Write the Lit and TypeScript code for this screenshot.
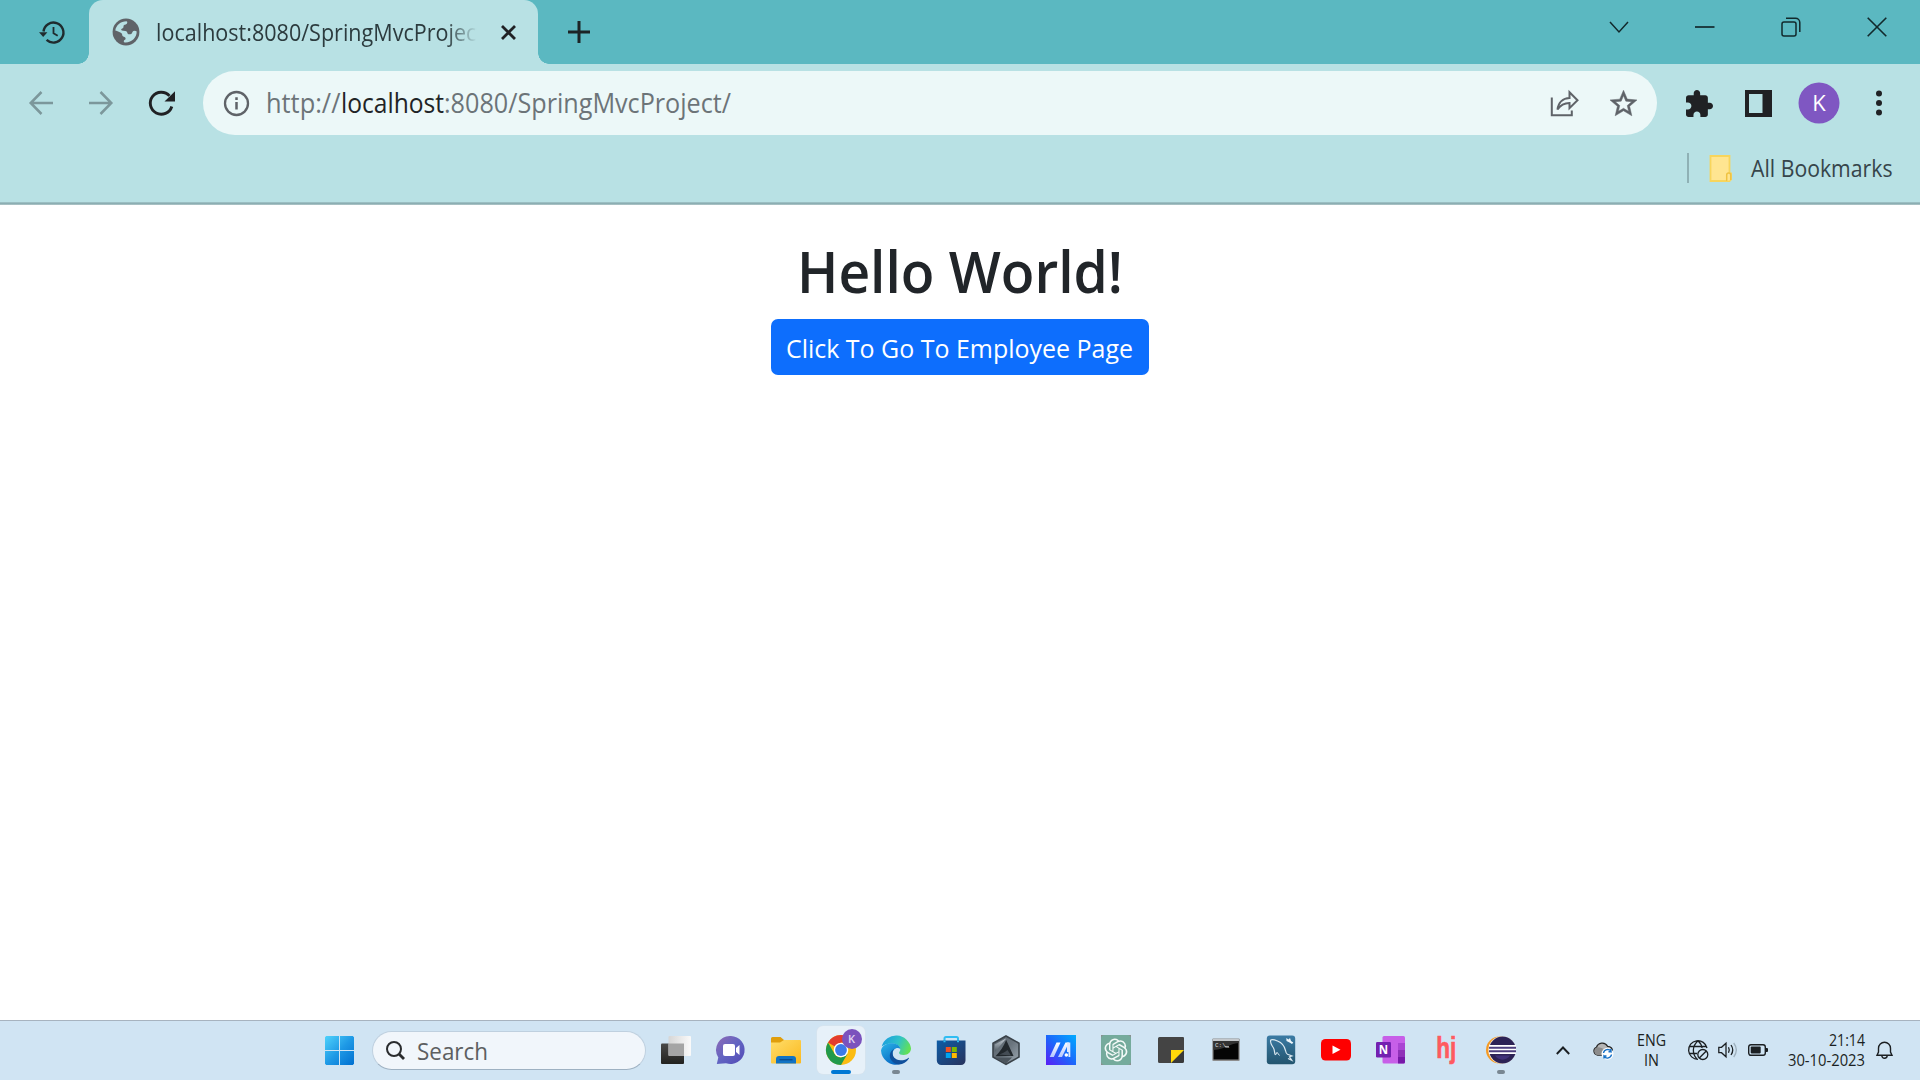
import { LitElement, html, svg, css } from "lit";
import { customElement, property } from "lit/decorators.js";

/** A line of text set to an exact measure. */
@customElement("fit-text")
class FitText extends LitElement {
  @property() text = "";
  @property({ type: Number }) w = 100;
  @property({ type: Number }) size = 16;
  @property({ type: Number }) weight = 400;
  static styles = css`
    :host { display: block; flex: none; }
    svg { display: block; overflow: visible; }
    text { font-family: "Open Sans", "Noto Sans", sans-serif; fill: currentColor; }
  `;
  render() {
    const h = Math.round(this.size * 1.2);
    return html`<svg width=${this.w} height=${h}>
      <text x="0" y=${h * 0.8} font-size=${this.size} font-weight=${this.weight}
        textLength=${this.w} lengthAdjust="spacingAndGlyphs">${this.text}</text>
    </svg>`;
  }
}

const icon = (w: number, h: number, body: unknown, vb = `0 0 ${w} ${h}`) =>
  html`<svg class="ic" width=${w} height=${h} viewBox=${vb}>${body}</svg>`;

const history = icon(26, 25, svg`
  <path d="M4.5 11.5A10 10 0 1 1 7.6 19.9" fill="none" stroke="#1f2b2e" stroke-width="2.4"/>
  <path d="M0 12.2h8.4L4.2 17z" fill="#1f2b2e"/>
  <path d="M14.5 7v6.2l4.2 2.6" fill="none" stroke="#1f2b2e" stroke-width="1.8"/>`);

const favicon = icon(28, 28, svg`
  <circle cx="14" cy="14" r="13.4" fill="#5f6368"/>
  <path d="M3.300 12.500C4 7.500 8.500 3.300 14.500 3.300C15.800 3.700 15.500 6 13.800 6.500C12 6.800 11.300 7.500 11.500 9C11.500 10.300 10 10.500 9.300 11C9 12 9.500 12.700 11 12.800C14 12.700 15.200 13.500 15.500 15.300C16 17 18 16 19.300 16C20.500 14.500 20.500 12.800 22.500 12.700C23.500 12.700 24.300 13 24.700 13.600C24.700 19.500 20 24.600 13.500 24.600C11.300 24.400 11.300 22.500 13 21.800C14 21.200 13.700 19.500 12.500 19C10.500 18.700 10.200 17.500 10 15.800C8 13.500 5.500 13.500 3.300 12.500z" fill="#b8e1e4"/>`);

const restore = icon(20, 20, svg`<g fill="none" stroke="#12292c" stroke-width="1.5">
  <rect x="1" y="5" width="14" height="14" rx="2"/><path d="M5 1.200h9.500a4.300 4.300 0 0 1 4.300 4.300V15"/></g>`);

const share = icon(29, 27, svg`<g fill="none" stroke="#5f6368" stroke-width="2">
  <path d="M1.800 7.500V25.200H21.800V20.500"/>
  <path d="M7.500 19.500C8.300 12.500 13 8.300 19.500 8V2.200L27.500 10.200L19.500 18.200V13C14.500 13 10.500 15 7.500 19.500Z"/></g>`);

const star = icon(27, 26, svg`<path fill="#5f6368" stroke="#5f6368" stroke-width=".35" d="M22 9.240l-7.190-.62L12 2 9.190 8.630 2 9.240l5.460 4.730L5.820 21 12 17.270 18.180 21l-1.630-7.030L22 9.240zM12 15.400l-3.760 2.270 1-4.280-3.320-2.880 4.380-.38L12 6.100l1.710 4.040 4.380.38-3.320 2.880 1 4.280L12 15.400z"/>`, "2 2 20 19");
const puzzle = icon(27, 27, svg`<path fill="#202124" d="M20.500 11H19V7c0-1.100-.9-2-2-2h-4V3.500C13 2.120 11.880 1 10.500 1S8 2.120 8 3.500V5H4c-1.100 0-1.990.9-1.990 2v3.800H3.500c1.490 0 2.700 1.210 2.700 2.700s-1.210 2.700-2.700 2.700H2V20c0 1.100.9 2 2 2h3.800v-1.500c0-1.490 1.210-2.700 2.700-2.700 1.490 0 2.700 1.210 2.700 2.700V22H17c1.100 0 2-.9 2-2v-4h1.500c1.380 0 2.500-1.120 2.500-2.500S21.880 11 20.500 11z"/>`, "2 1 21 21");

const winLogo = icon(29, 29, svg`
  <defs><linearGradient id="wl" gradientUnits="userSpaceOnUse" x1="0" y1="0" x2="29" y2="29"><stop offset="0" stop-color="#4fd2fb"/><stop offset=".5" stop-color="#1f9ae6"/><stop offset="1" stop-color="#006fd0"/></linearGradient></defs>
  <path fill="url(#wl)" d="M1.200 0H14V14H0V1.200zM15 0H27.800L29 1.200V14H15zM0 15H14V29H1.200L0 27.800zM15 15H29V27.800L27.800 29H15z"/>`);

/* Pinned applications, each drawn in a 30 x 30 box. */
const apps: { art: unknown; mark?: string }[] = [
  { art: svg`<defs><linearGradient id="tv" x1="0" y1="0" x2="0" y2="1"><stop offset="0" stop-color="#494949"/><stop offset="1" stop-color="#22221f"/></linearGradient>
      <linearGradient id="tw" x1="0" y1="0" x2="1" y2="0"><stop offset="0" stop-color="#d6d6d6"/><stop offset="1" stop-color="#fafafa"/></linearGradient></defs>
      <rect x="0" y="8.500" width="23" height="20.500" rx="1" fill="url(#tv)"/><rect x="7.500" y="1" width="22.500" height="20" rx="1" fill="url(#tw)"/>
      <path d="M7.500 8.500H23V21H8.500a1 1 0 0 1-1-1z" fill="#a5a5a5"/>` },
  { art: svg`<defs><linearGradient id="ch" x1="0" y1="0" x2="1" y2="1"><stop offset="0" stop-color="#8f6bb5"/><stop offset=".5" stop-color="#6264c2"/><stop offset="1" stop-color="#5148b5"/></linearGradient></defs>
      <path d="M15 1a14 14 0 1 1-5 27.200L.8 29l1.500-6.500A14 14 0 0 1 15 1z" fill="url(#ch)"/>
      <rect x="7" y="9" width="12" height="12" rx="2" fill="#fff"/><path d="M20 13l3.500-3v10L20 17z" fill="#fff"/>` },
  { art: svg`<defs><linearGradient id="fo" x1="0" y1="0" x2="1" y2="1"><stop offset="0" stop-color="#ffdd6a"/><stop offset="1" stop-color="#fbb91e"/></linearGradient></defs>
      <path d="M0 3.500A1.500 1.500 0 0 1 1.500 2H9.500L13 5V10H0z" fill="#e09e0c"/>
      <path d="M0 7.500H9L13 5H29a1 1 0 0 1 1 1V27.500a1 1 0 0 1-1 1H1a1 1 0 0 1-1-1z" fill="url(#fo)"/>
      <path d="M5 28.500V24a3 3 0 0 1 3-3H22a3 3 0 0 1 3 3V28.500z" fill="#1173c4"/><path d="M8.500 24.700H21.500" stroke="#0a4d91" stroke-width="1.400"/>` },
  { mark: "active", art: svg`
      <circle cx="15" cy="15" r="15" fill="#fbbc12"/>
      <path d="M15 15L2 7.500A15 15 0 0 1 28 7.500H15z" fill="#e33b2e"/>
      <path d="M2 7.500L8.500 18.750A7.500 7.500 0 0 0 15 22.500L21.500 18.750L15 30A15 15 0 0 1 2 7.500z" fill="#219a4b"/>
      <circle cx="15" cy="15" r="7.300" fill="#fff"/><circle cx="15" cy="15" r="5.900" fill="#3c7bea"/>
      <circle cx="26" cy="4" r="10" fill="#7b52bd"/>
      <text x="25.500" y="8" text-anchor="middle" font-family="Open Sans, sans-serif" font-size="11" font-weight="600" fill="#e0d4f2">K</text>` },
  { mark: "open", art: svg`<defs><linearGradient id="e1" x1="0" y1=".2" x2="1" y2=".5"><stop offset="0" stop-color="#1a9ce0"/><stop offset=".55" stop-color="#2fc2c9"/><stop offset="1" stop-color="#63e155"/></linearGradient>
      <linearGradient id="e2" x1="0" y1="0" x2=".6" y2="1"><stop offset="0" stop-color="#2bb5e8"/><stop offset="1" stop-color="#0869c4"/></linearGradient></defs>
      <path d="M.7 11.500A15 15 0 0 1 30 13.300c0 4-3 6.700-7.300 6.700-3 0-4.600-1-4.600-2.300 0-1 1.200-1.500 1.200-3.300 0-3.500-3.800-6-8.400-6C6 8.400 2.300 10 .7 11.500z" fill="url(#e1)"/>
      <path d="M0 15.500C1 10.500 5.500 8.300 10.500 8.300c5 0 8.700 2.400 8.800 5.700-1.500-1.400-4.500-1.300-6.300.8-3 3.600-1 11.200 5.500 14.500A15 15 0 0 1 0 15.500z" fill="url(#e2)"/>
      <path d="M11.900 15.800c-1.600 5 2.300 9.500 7.600 9.500 3.500 0 6-1 7.800-2.400.5-.3.900 0 .6.600C24 30 15.500 31.800 10.500 25.500 7.600 21.500 8.500 17 13 13.800z" fill="#10509c"/>` },
  { art: svg`<defs><linearGradient id="st" x1="0" y1="0" x2="1" y2="1"><stop offset="0" stop-color="#0e5da7"/><stop offset="1" stop-color="#28325c"/></linearGradient></defs>
      <path d="M8.500 7V3.500a1.500 1.500 0 0 1 1.500-1.500H20.500a1.500 1.500 0 0 1 1.500 1.500V7" fill="none" stroke="#30bdf2" stroke-width="2"/>
      <path d="M.8 5.500H29.500V25.500a4.500 4.500 0 0 1-4.500 4.500H5.300A4.500 4.500 0 0 1 .8 25.500z" fill="url(#st)"/><path d="M8.500 7.200V5.500M22 7.200V5.500" stroke="#30bdf2" stroke-width="2"/>
      <path d="M9.800 12h5v5h-5z" fill="#f25022"/><path d="M15.800 12h5v5h-5z" fill="#7fba00"/><path d="M9.800 18h5v5h-5z" fill="#00a4ef"/><path d="M15.800 18h5v5h-5z" fill="#ffb900"/>` },
  { art: svg`<defs><linearGradient id="ar" x1="0" y1="0" x2="1" y2="1"><stop offset="0" stop-color="#59636c"/><stop offset=".5" stop-color="#6a747d"/><stop offset="1" stop-color="#9fabb5"/></linearGradient>
      <linearGradient id="as" x1="0" y1="0" x2="0" y2="1"><stop offset="0" stop-color="#c3ccd4"/><stop offset="1" stop-color="#4e5860"/></linearGradient></defs>
      <path d="M15 1L28 8.200V22L15 29.300L2 22V8.200z" fill="url(#ar)" stroke="#3a4249" stroke-width="1.600"/>
      <path d="M15 3.500L3.800 9.500V17L14 5z" fill="url(#as)"/>
      <path d="M15.200 5L22.500 21L4.500 21.300C9 17 12.500 11.500 15.200 5z" fill="#22282d"/>
      <path d="M8 19.500C11 18.500 14 17.500 16.500 15L20 20.500z" fill="#444c54"/>
      <path d="M3.500 22.500L21 22.500L15 28.500z" fill="#4b545c"/>` },
  { art: svg`<defs><linearGradient id="my" x1="0" y1="1" x2="1" y2="0"><stop offset="0" stop-color="#5b1df5"/><stop offset=".5" stop-color="#1c68fb"/><stop offset="1" stop-color="#00acff"/></linearGradient>
      <linearGradient id="ms" x1="0" y1="0" x2="0" y2="1"><stop offset="0" stop-color="#fff"/><stop offset="1" stop-color="#b5c6ff"/></linearGradient></defs>
      <rect width="30" height="30" fill="url(#my)"/><path d="M10.500 7.500H14.500L7.800 22H3.700z" fill="url(#ms)"/><path d="M19.500 7.500H23L16 22H12z" fill="url(#ms)"/><path d="M21 7.500H24.300V22H22.500V17H21z" fill="#dfe9ff"/><circle cx="20.300" cy="20" r="1.800" fill="#fff"/>` },
  { art: svg`<rect width="30" height="30" fill="#8b8f90"/><rect width="30" height="30" rx="4" fill="#75ab9c"/>
      <g transform="translate(3.500 3.500) scale(.955)"><path fill="#f4faf8" d="M22.2819 9.8211a5.9847 5.9847 0 0 0-.5157-4.9108 6.0462 6.0462 0 0 0-6.5098-2.9A6.0651 6.0651 0 0 0 4.9807 4.1818a5.9847 5.9847 0 0 0-3.9977 2.9 6.0462 6.0462 0 0 0 .7427 7.0966 5.98 5.98 0 0 0 .511 4.9107 6.051 6.051 0 0 0 6.5146 2.9001A5.9847 5.9847 0 0 0 13.2599 24a6.0557 6.0557 0 0 0 5.7718-4.2058 5.9894 5.9894 0 0 0 3.9977-2.9001 6.0557 6.0557 0 0 0-.7475-7.0729zm-9.022 12.6081a4.4755 4.4755 0 0 1-2.8764-1.0408l.1419-.0804 4.7783-2.7582a.7948.7948 0 0 0 .3927-.6813v-6.7369l2.02 1.1686a.071.071 0 0 1 .038.0615v5.5826a4.504 4.504 0 0 1-4.4945 4.4944zm-9.6607-4.1254a4.4708 4.4708 0 0 1-.5346-3.0137l.142.0852 4.783 2.7582a.7712.7712 0 0 0 .7806 0l5.8428-3.3685v2.3324a.0804.0804 0 0 1-.0332.0615L9.74 19.9502a4.4992 4.4992 0 0 1-6.1408-1.6464zM2.3408 7.8956a4.485 4.485 0 0 1 2.3655-1.9728V11.6a.7664.7664 0 0 0 .3879.6765l5.8144 3.3543-2.0201 1.1685a.0757.0757 0 0 1-.071 0l-4.8303-2.7865A4.504 4.504 0 0 1 2.3408 7.872zm16.5963 3.8558L13.1038 8.364 15.1192 7.2a.0757.0757 0 0 1 .071 0l4.8303 2.7913a4.4944 4.4944 0 0 1-.6765 8.1042v-5.6772a.79.79 0 0 0-.407-.667zm2.0107-3.0231l-.142-.0852-4.7735-2.7818a.7759.7759 0 0 0-.7854 0L9.409 9.2297V6.8974a.0662.0662 0 0 1 .0284-.0615l4.8303-2.7866a4.4992 4.4992 0 0 1 6.6802 4.66zM8.3065 12.863l-2.02-1.1638a.0804.0804 0 0 1-.038-.0567V6.0742a4.4992 4.4992 0 0 1 7.3757-3.4537l-.142.0805L8.704 5.459a.7948.7948 0 0 0-.3927.6813zm1.0976-2.3654l2.602-1.4998 2.6069 1.4998v2.9994l-2.5974 1.4997-2.6067-1.4997Z"/></g>` },
  { art: svg`<path d="M3.500 2H27A1 1 0 0 1 28 3V15.500L15.500 28H3.500A1.500 1.500 0 0 1 2 26.500V3.500A1.500 1.500 0 0 1 3.500 2z" fill="#444"/><path d="M28 15L15 28H26.500A1.500 1.500 0 0 0 28 26.500z" fill="#393939"/><path d="M15 15H28L15 28z" fill="#ffd90a"/>` },
  { art: svg`<rect x="1.300" y="3.500" width="27.400" height="22.500" rx="1" fill="#8e8e8e"/><rect x="1.900" y="4" width="26" height="2" fill="#c4c8cc"/><rect x="2.500" y="6" width="25" height="18.500" fill="#050505"/><path d="M2.500 6H27.500V8C18 8.500 16 14 2.500 15z" fill="#333"/>
      <text x="4" y="12.300" font-family="Liberation Mono, monospace" font-size="6" fill="#ddd">C:\\_</text><path d="M14 11.800h4" stroke="#ddd"/>` },
  { art: svg`<defs><linearGradient id="sq" x1="0" y1="0" x2="0" y2="1"><stop offset="0" stop-color="#3b7ba4"/><stop offset="1" stop-color="#23556f"/></linearGradient></defs>
      <rect x=".8" y=".5" width="28.400" height="28.700" rx="3" fill="url(#sq)"/>
      <path d="M9.500 20C8 18 9 15.500 7.500 13C5.500 10 4 7 4.700 5.200C6 3.800 9 5 11.500 6C15.500 7.500 18.500 11 19.500 15.500C19.800 17.500 20.300 18.500 21.500 19.200L26 21L23.500 21.800L25.800 25.300L22 23.500" fill="none" stroke="#dbe9f1" stroke-width="1.200"/><path d="M9.500 20L11 17.300L13.500 20.500" fill="none" stroke="#dbe9f1"/>
      <path d="M20.300 3L22.500 4.500L24 3L25 6L27.300 7.500L26 9L23.500 7.500L20.500 6z" fill="#eef6fb"/>` },
  { art: svg`<rect x="0" y="4" width="30" height="21.500" rx="4.500" fill="#fe0000"/><path d="M11.500 10.500L19.500 14.800L11.500 19.100z" fill="#fff"/>` },
  { art: svg`<rect x="6.500" y="1" width="22.500" height="27.500" rx="1.500" fill="#c75fe8"/><path d="M22 8h7v7h-7z" fill="#aa45d3"/><path d="M22 15h7v6.500h-7z" fill="#8f31b8"/><path d="M22 21.500h7V27a1.500 1.500 0 0 1-1.500 1.500H22z" fill="#7719a8"/>
      <rect x="0" y="7" width="15" height="15.500" rx="1.300" fill="#7320b0"/><text x="7.500" y="18.800" text-anchor="middle" font-family="Open Sans, sans-serif" font-size="11.500" font-weight="700" fill="#fff">N</text>` },
  { art: svg`<text x="5.300" y="23" font-family="Liberation Sans Narrow, Liberation Sans, sans-serif" font-size="29.500" font-weight="700" textLength="20" lengthAdjust="spacingAndGlyphs" fill="#ff5a5f" stroke="#ff5a5f" stroke-width=".7">hj</text>` },
  { mark: "open", art: svg`<circle cx="13.500" cy="15" r="13.500" fill="#f59a23"/><circle cx="16" cy="15" r="13.700" fill="#f5ebd8"/><circle cx="16.500" cy="15" r="13.400" fill="#2c2255"/>
      <path d="M9 20.500H24C21 26 12 26 9 20.500z" fill="#403279"/><rect x="3.300" y="10" width="26.700" height="9" fill="#4b3d7d"/>
      <path d="M3 10.800H30M3 14.500H30M3 18.200H30" stroke="#fff" stroke-width="1.700"/>` },
];

@customElement("app-root")
class AppRoot extends LitElement {
  static styles = css`
    :host { display: flex; flex-direction: column; width: 1920px; height: 1080px; overflow: hidden; background: #fff; font-family: "Open Sans", "Noto Sans", sans-serif; }
    .ic { display: block; flex: none; overflow: visible; }
    .strip { height: 64px; flex: none; background: #5bb8c1; display: flex; align-items: stretch; }
    .hist { width: 50px; padding-left: 39px; display: flex; align-items: center; }
    .tab { position: relative; box-sizing: border-box; width: 449px; height: 64px; background: #b8e1e4; border-radius: 14px 14px 0 0; display: flex; align-items: center; padding-left: 23px; }
    .tab::before, .tab::after { content: ""; position: absolute; bottom: 0; width: 11px; height: 11px; }
    .tab::before { left: -11px; background: radial-gradient(circle at 0 0, transparent 10.5px, #b8e1e4 11px); }
    .tab::after { right: -11px; background: radial-gradient(circle at 100% 0, transparent 10.5px, #b8e1e4 11px); }
    .title { width: 322px; height: 36px; margin-left: 15.500px; overflow: hidden; color: #2c3b3e; padding-top: 5px; box-sizing: border-box; -webkit-mask-image: linear-gradient(90deg, #000 290px, transparent 321px); }
    .shut { margin-left: 23px; }
    .plus { margin-left: 30px; align-self: center; }
    .controls { margin-left: auto; display: flex; gap: 66px; padding: 17px 33px 0 0; height: 20px; align-items: center; }
    .bar { height: 78px; flex: none; background: #b8e1e4; display: flex; align-items: center; }
    .nav { display: flex; width: 174px; padding-left: 29px; gap: 36px; }
    .omni { box-sizing: border-box; width: 1454px; height: 64px; border-radius: 32px; background: #ecf8f8; display: flex; align-items: center; padding: 0 20px 0 21px; }
    .url { display: flex; margin-left: 17px; color: #6c7478; }
    .url .host { color: #1f2426; }
    .push { margin-left: auto; }
    .next { margin-left: 31px; }
    .tools { display: flex; align-items: center; padding-left: 29px; }
    .panel { margin-left: 32px; }
    .avatar { margin-left: 26px; }
    .more { margin-left: 36px; }
    .marks { height: 60px; box-sizing: border-box; padding: 0 28px 8px 0; flex: none; background: #b8e1e4; display: flex; align-items: center; justify-content: flex-end; color: #36454a; }
    .marks fit-text { margin: 2px 0 0 19px; }
    .rule { width: 1.500px; height: 30px; background: #8fb1b5; margin-right: 20px; }
    .edge { height: 3px; flex: none; background: linear-gradient(#a3c6ca, #86a9ad 60%, #bdd0d2); }
    .page { flex: 1; display: flex; flex-direction: column; align-items: center; padding-top: 33px; color: #212529; }
    .page > fit-text { margin-right: 1px; }
    .btn { margin-top: 12px; box-sizing: border-box; width: 378px; height: 56px; border: 0; border-radius: 7px; background: #0d6efd; color: #fff; display: flex; justify-content: center; align-items: center; padding: 2px 1px 0 0; }
    .task { height: 60px; box-sizing: border-box; flex: none; border-top: 1px solid #a7b3bf; background: #d0e4f3; display: flex; align-items: center; padding-left: 325px; color: #1b1f22; }
    .search { box-sizing: border-box; width: 274px; height: 39px; margin-left: 18px; border-radius: 20px; background: #f1f6fb; border: 1px solid #bfd0df; border-bottom-color: #9eb1c2; display: flex; align-items: center; padding-left: 13px; color: #5d5f61; }
    .search fit-text { margin: 2px 0 0 12px; }
    .apps { display: flex; align-self: flex-start; margin-left: 2.500px; }
    .app { position: relative; width: 55px; height: 58px; display: flex; justify-content: center; align-items: center; }
    .app svg { position: relative; }
    .app.active::before { content: ""; position: absolute; inset: 5px 3.500px; border-radius: 6px; background: #e7f1f9; box-shadow: 0 0 0 .5px #d9e3ec; }
    .app::after { position: absolute; bottom: 5px; height: 4px; border-radius: 2px; }
    .app.active::after { content: ""; width: 20px; background: #0078d4; }
    .app.open::after { content: ""; width: 8px; background: #798792; }
    .tray { flex: 1; display: flex; align-items: center; padding-left: 27.500px; padding-bottom: 1px; }
    .cloud { margin-left: 23px; }
    .net { margin-left: 22px; }
    .dev { margin-left: 10px; }
    .bell { margin-left: 11px; }
    .stack { display: flex; flex-direction: column; gap: 1px; }
    .lang { width: 30px; align-items: center; margin-left: 23px; }
    .clock { width: 77px; align-items: flex-end; margin-left: 20px; }
  `;
  render() {
    return html`
      <div class="strip">
        <div class="hist">${history}</div>
        <div class="tab">
          ${favicon}
          <div class="title"><fit-text text="localhost:8080/SpringMvcProject" .w=${328} .size=${23.5}></fit-text></div>
          <div class="shut">${icon(15, 15, svg`<path d="M1 1L14 14M14 1L1 14" stroke="#202124" stroke-width="2.800"/>`)}</div>
        </div>
        <div class="plus">${icon(22, 22, svg`<path d="M11 0V22M0 11H22" stroke="#1c2426" stroke-width="3"/>`)}</div>
        <div class="controls">
          ${icon(20, 12, svg`<path d="M1 1L10 11L19 1" fill="none" stroke="#12292c" stroke-width="1.500"/>`)}
          ${icon(20, 2, svg`<path d="M0 1H19.500" stroke="#12292c" stroke-width="1.700"/>`)}
          ${restore}
          ${icon(20, 20, svg`<path d="M.7.7L19.300 19.300M19.300.7L.7 19.300" stroke="#12292c" stroke-width="1.600"/>`)}
        </div>
      </div>
      <div class="bar">
        <div class="nav">
          ${icon(24, 24, svg`<path d="M24 12H2M12.500 1L1.700 12L12.500 23" fill="none" stroke="#7c979b" stroke-width="2.500"/>`)}
          ${icon(24, 24, svg`<path d="M0 12H22M11.500 1L22.300 12L11.500 23" fill="none" stroke="#7c979b" stroke-width="2.500"/>`)}
          ${icon(26, 25, svg`<path d="M22.800 15.500A11 11 0 1 1 20.500 4.900" fill="none" stroke="#202124" stroke-width="2.900"/><path d="M26 .3V10.500H15.500z" fill="#202124"/>`)}
        </div>
        <div class="omni">
          ${icon(25, 26, svg`<circle cx="12.500" cy="13.500" r="11.500" fill="none" stroke="#5f6368" stroke-width="2.300"/><path d="M12.500 12V19.500M12.500 7.300V10" stroke="#5f6368" stroke-width="2.500"/>`)}
          <div class="url">
            <fit-text text="http://" .w=${74.5} .size=${26.5}></fit-text>
            <fit-text class="host" text="localhost" .w=${103} .size=${26.5}></fit-text>
            <fit-text text=":8080/SpringMvcProject/" .w=${287} .size=${26.5}></fit-text>
          </div>
          <div class="push">${share}</div>
          <div class="next">${star}</div>
        </div>
        <div class="tools">
          ${puzzle}
          <div class="panel">${icon(27, 27, svg`<path fill="#202124" fill-rule="evenodd" d="M0 0H27V27H0zM4 4V23H17.500V4z"/>`)}</div>
          <div class="avatar">${icon(42, 42, svg`<circle cx="21" cy="21" r="20.500" fill="#7f57c2"/><text x="21" y="29" text-anchor="middle" font-family="Open Sans, sans-serif" font-size="22" fill="#fff">K</text>`)}</div>
          <div class="more">${icon(6, 26, svg`<g fill="#202124"><circle cx="3" cy="3.600" r="3"/><circle cx="3" cy="13" r="3"/><circle cx="3" cy="22.400" r="3"/></g>`)}</div>
        </div>
      </div>
      <div class="marks">
        <div class="rule"></div>
        ${icon(23, 27, svg`<path d="M1.500 1H20.500V18.500H22V24.500L20.500 26H1.500z" fill="#ffe591" stroke="#f8d55c" stroke-width="1.800"/><path d="M17.700 26V20a2 2 0 0 1 4 0V25" fill="#ffe591" stroke="#efc242" stroke-width="1.500"/>`)}
        <fit-text text="All Bookmarks" .w=${141.5} .size=${23}></fit-text>
      </div>
      <div class="edge"></div>
      <div class="page">
        <fit-text text="Hello World!" .w=${326} .size=${57.5} .weight=${550}></fit-text>
        <button class="btn"><fit-text text="Click To Go To Employee Page" .w=${347} .size=${26}></fit-text></button>
      </div>
      <div class="task">
        ${winLogo}
        <div class="search">
          ${icon(19, 19, svg`<circle cx="8" cy="8" r="7" fill="none" stroke="#2a2c2e" stroke-width="2"/><path d="M13 13L18 18" stroke="#2a2c2e" stroke-width="2.800"/>`)}
          <fit-text text="Search" .w=${71} .size=${23.5}></fit-text>
        </div>
        <div class="apps">${apps.map((a) => html`<div class="app ${a.mark ?? ""}">${icon(30, 30, a.art)}</div>`)}</div>
        <div class="tray">
          ${icon(14, 9, svg`<path d="M.8 8L7 1.500L13.200 8" fill="none" stroke="#1b1f22" stroke-width="1.900"/>`)}
          <div class="cloud">${icon(20, 18, svg`<path d="M4.500 14A4 4 0 0 1 3.500 6.300C5 1.500 12 .500 14.500 5.300C18 5.300 20 8 19.300 10.500C18.800 13 17 14 15 14z" fill="#b5b5b5" stroke="#262626" stroke-width="1.300"/><path d="M3.500 6.500C8 5.500 11 9 18 11.500L15 14H4.500C1 14 0 8 3.500 6.500z" fill="#8c8c8c"/><circle cx="14.500" cy="12.800" r="6" fill="#fff"/><path d="M10.500 12A4.200 4.200 0 0 1 18 10.200V8M18.500 13.500A4.200 4.200 0 0 1 11 15.400V17.500M18.500 10.700H15.500M10.500 15H13.500" fill="none" stroke="#1570c6" stroke-width="1.400"/>`)}</div>
          <div class="stack lang"><fit-text text="ENG" .w=${29} .size=${15.5}></fit-text><fit-text text="IN" .w=${15} .size=${15.5}></fit-text></div>
          <div class="net">${icon(20, 20, svg`<g fill="none" stroke="#1b1f22" stroke-width="1.300"><path d="M19 8A9.300 9.300 0 1 0 10 19.300M1.500 6.500H18.500M1.500 13.500H9M10 .7C4 6 4 14 9 19M10 .7C12.500 3 13.800 5.500 14 8"/><circle cx="14.800" cy="14.500" r="5"/><path d="M11.300 18L18.300 11"/></g>`)}</div>
          <div class="dev">${icon(20, 18, svg`<g fill="none" stroke="#1b1f22" stroke-width="1.300"><path d="M.8 6.300H3.500L8 2.200V15.800L3.500 11.700H.8z"/><path d="M10.500 6.300Q12 9 10.500 11.700M13 4Q16.500 9 13 14"/><path d="M15.700 2Q21 9 15.700 16" stroke="#9fb0bd"/></g>`)}</div>
          <div class="dev">${icon(20, 12, svg`<rect x=".7" y=".7" width="16.600" height="10.600" rx="2.200" fill="none" stroke="#1b1f22" stroke-width="1.400"/><rect x="2.700" y="2.600" width="10" height="6.800" rx=".8" fill="#1b1f22"/><path d="M17.500 4H19a1 1 0 0 1 1 1V7a1 1 0 0 1-1 1H17.500z" fill="#1b1f22"/>`)}</div>
          <div class="stack clock"><fit-text text="21:14" .w=${36} .size=${15.5}></fit-text><fit-text text="30-10-2023" .w=${77} .size=${15.5}></fit-text></div>
          <div class="bell">${icon(17, 19, svg`<path d="M1 14.300L2.500 11V7.300A6 6 0 0 1 14.500 7.300V11L16 14.300zM5.800 14.500A2.700 2.700 0 0 0 11.200 14.500" fill="none" stroke="#1b1f22" stroke-width="1.400"/>`)}</div>
        </div>
      </div>`;
  }
}
